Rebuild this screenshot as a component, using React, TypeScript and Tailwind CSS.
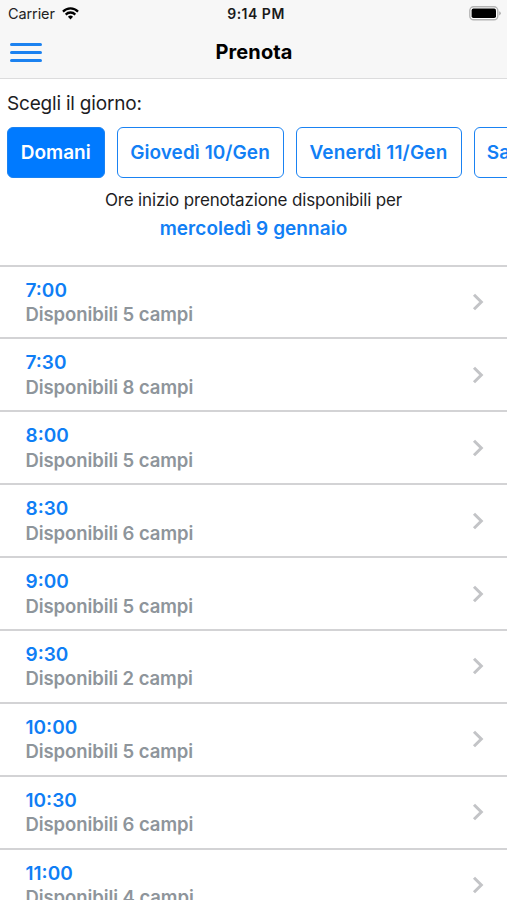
import { useState } from 'react'

interface Slot {
  time:   string
  courts: number
}

const DAYS = [
  { label: 'Domani',         className: 'w-[97.5px]' },
  { label: 'Giovedì 10/Gen', className: 'w-[167px] tracking-[0.05px]' },
  { label: 'Venerdì 11/Gen', className: 'w-[166px] tracking-[0.15px]' },
  { label: 'Sabato 12/Gen',  className: 'w-[160px]'  },
]

const SLOTS: Slot[] = [
  { time: '7:00',  courts: 5 },
  { time: '7:30',  courts: 8 },
  { time: '8:00',  courts: 5 },
  { time: '8:30',  courts: 6 },
  { time: '9:00',  courts: 5 },
  { time: '9:30',  courts: 2 },
  { time: '10:00', courts: 5 },
  { time: '10:30', courts: 6 },
  { time: '11:00', courts: 4 },
]

function StatusBar() {
  return (
    <div className="grid h-[27px] grid-cols-3 items-center pr-[6px] pl-2 text-black">
      <div className="flex items-center gap-[7px]">
        <span className="text-[14.5px] tracking-[-0.1px] text-[#222]">Carrier</span>
        <svg width="17" height="13" viewBox="0 0 18 13" preserveAspectRatio="none" fill="none" stroke="currentColor" strokeWidth="2.3">
          <path d="M1 4.6a11.3 11.3 0 0 1 16 0" />
          <path d="M3.9 7.6a7.2 7.2 0 0 1 10.2 0" />
          <path d="M9 12.6 6.3 9.8a3.9 3.9 0 0 1 5.4 0Z" fill="currentColor" stroke="none" />
        </svg>
      </div>
      <span className="pl-[3px] text-center text-[14px] font-semibold tracking-[0.5px] whitespace-nowrap text-[#1a1a1a]">9:14 PM</span>
      <svg className="justify-self-end" width="32" height="15" viewBox="0 0 32 15">
        <rect x="0.8" y="0.8" width="28" height="13" rx="3.8" fill="#fff" stroke="#b4b4b4" strokeWidth="1.4" />
        <rect x="2.6" y="2.6" width="24.4" height="9.4" rx="1.8" fill="#000" />
        <path d="M30.4 5.2a2.4 2.4 0 0 1 0 4.2Z" fill="#999" />
      </svg>
    </div>
  )
}

function NavBar() {
  return (
    <div className="grid h-[50px] grid-cols-3 items-center px-[10px]">
      <button type="button" aria-label="Menu" className="flex w-8 flex-col gap-[5px] pt-px">
        <span className="h-[3px] rounded-full bg-[#1c82f0]" />
        <span className="h-[3px] rounded-full bg-[#1c82f0]" />
        <span className="h-[3px] rounded-full bg-[#1c82f0]" />
      </button>
      <h1 className="pl-px text-center text-[20px] leading-7 font-bold tracking-[0.1px] text-black">Prenota</h1>
    </div>
  )
}

function SlotRow({ slot }: { slot: Slot }) {
  return (
    <li className="flex h-[72.9px] items-center justify-between border-t-2 border-[#d3d3d5] pr-[23px] pl-[25.5px]">
      <div className="pt-px">
        <p className="text-[19px] leading-[24.5px] font-semibold text-[#0f7ef5]">{slot.time}</p>
        <p className="text-[18.5px] leading-[23.5px] font-semibold tracking-[-0.08px] text-[#8e959b]">
          Disponibili {slot.courts} campi
        </p>
      </div>
      <svg width="12" height="18" viewBox="0 0 12 18" fill="none" stroke="#c3c4c7" strokeWidth="3">
        <path d="M2 1.8 9.3 9 2 16.2" />
      </svg>
    </li>
  )
}

export default function App() {
  const [selected, setSelected] = useState(0)

  return (
    <div className="h-[900px] w-[507px] overflow-hidden bg-white font-['Inter',sans-serif]">
      <header className="h-[79px] border-b border-[#dcdcdd] bg-[#f7f7f7]">
        <StatusBar />
        <NavBar />
      </header>

      {/* Scelta del giorno */}
      <section className="h-[185.6px]">
        <p className="pt-3 pl-[7px] text-[19px] leading-[26px] tracking-[-0.2px] text-[#1d1d1f]">Scegli il giorno:</p>
        <div className="mt-[10px] flex gap-3 overflow-hidden pl-[7px]">
          {DAYS.map((day, i) => (
            <button
              key={day.label}
              type="button"
              onClick={() => setSelected(i)}
              className={`h-[51px] shrink-0 rounded-[6px] border border-[#1a82f2] pt-[2px] text-[19px] font-semibold whitespace-nowrap ${day.className} ${
                i === selected ? 'bg-[#007aff] text-white' : 'bg-white text-[#127ff5]'
              }`}
            >
              {day.label}
            </button>
          ))}
        </div>
        <div className="pt-2 text-center">
          <p className="text-[17px] leading-[29px] tracking-[-0.16px] text-[#1d1d1f]">Ore inizio prenotazione disponibili per</p>
          <p className="text-[19px] leading-7 font-semibold tracking-[0.05px] text-[#127ff5]">mercoledì 9 gennaio</p>
        </div>
      </section>

      <ul>
        {SLOTS.map((slot) => (
          <SlotRow key={slot.time} slot={slot} />
        ))}
      </ul>
    </div>
  )
}
